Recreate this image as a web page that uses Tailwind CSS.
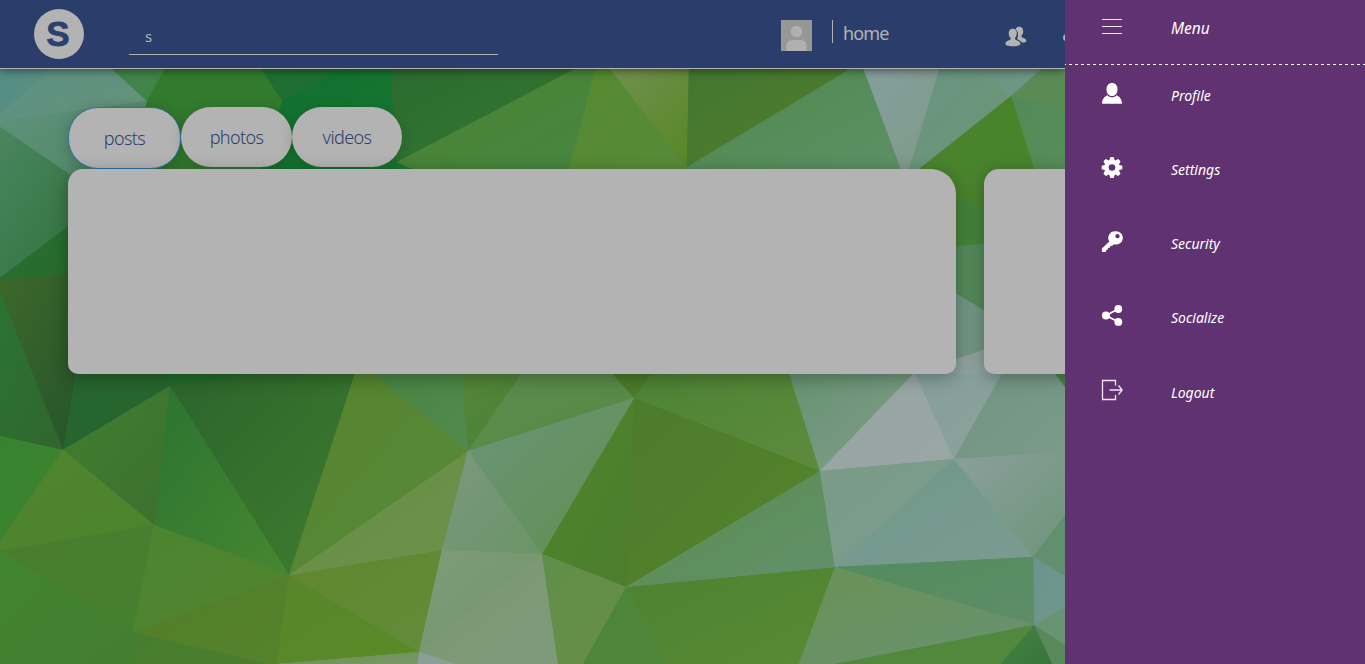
<!DOCTYPE html>
<html lang="en">
<head>
<meta charset="utf-8">
<title>Home</title>
<script src="https://cdn.jsdelivr.net/npm/@tailwindcss/browser@4"></script>
</head>
<body class="relative h-[664px] w-[1365px] overflow-hidden bg-[#1e7031] font-['Noto_Sans','Open_Sans',sans-serif]">
<svg id="backdrop" class="absolute inset-0 -z-10" width="1365" height="664" viewBox="0 0 1365 664"></svg>
<div class="flex h-full">
  <div class="h-full w-[1065px] shrink-0 overflow-hidden">
    <header class="flex h-[69px] items-start border-b border-[#b3b3b3] bg-[#2b3e6b] text-[#b3b3b3] shadow-[0_2px_8px_rgba(0,0,0,0.45)]">
      <div class="mt-[9px] ml-[34px] flex size-[50px] shrink-0 items-center justify-center rounded-full bg-[#b3b3b3]">
        <span class="mt-[-2px] ml-[-2px] font-['Liberation_Sans',sans-serif] text-[35px] leading-none font-bold text-[#2b4170] [-webkit-text-stroke:0.8px_#2b4170]">S</span>
      </div>
      <div class="ml-[45px] h-[55px] w-[369px] shrink-0 border-b border-[#b3b3b3] pt-[25px] pl-4 text-[15px] leading-[22px]">s</div>
      <svg class="mt-5 ml-[283px] shrink-0" width="31" height="31" viewBox="0 0 31 31"><rect width="31" height="31" fill="#979797"/><circle cx="15.500" cy="11.500" r="5.800" fill="#b0b0b0"/><path d="M5.300 31v-4.500q0-6.500 6.500-6.500h7.400q6.500 0 6.500 6.500V31z" fill="#b0b0b0"/></svg>
      <div class="mt-5 ml-5 h-[23px] shrink-0 border-l border-[#b3b3b3] pl-[10px] text-[18px] leading-[26px] tracking-[-0.9px]"><span class="inline-block w-[60px]">home</span></div>
      <svg class="mt-[26px] ml-[102px] shrink-0" width="22" height="21" viewBox="0 0 22 21" fill="#b3b3b3"><path d="M10.500 3.500C11.200 1.500 12.500.800 14.200.800c2.600 0 4 1.900 4 4.400 0 2-.7 3.500-1.700 4.400-.3 1 .1 1.600 1 2 2.300 1 3.900 1.600 3.900 3.600 0 .9-2.300 1.400-4.700 1.200-.8-1.600-2.400-2.300-4-3-.6-.3-.7-.8-.2-1.600C13.600 9.500 13.200 4.800 10.500 3.500z"/><path d="M7.700 2.700c2.600 0 4.100 2 4.100 4.600 0 2-.8 3.700-1.800 4.600-.3 1.100.1 1.700 1.100 2.100 2.500 1 4.300 1.700 4.300 3.900 0 1.500-3.400 2.300-7.500 2.300S.4 19.500.4 18c0-2.200 1.500-3.100 4.200-4 .9-.3 1.300-1 1-2.100-1.200-.9-1.900-2.600-1.900-4.600 0-2.700 1.400-4.600 4-4.600z"/></svg>
      <div class="mt-[34px] ml-[36px] size-[7px] shrink-0 rounded-full bg-[#b3b3b3]"></div>
    </header>
    <main class="pt-[38px] pl-[68px] text-[18px] font-light tracking-[-0.6px] text-[#2b3e6b]">
      <nav class="flex h-[62px] items-start">
        <div class="flex h-[62px] w-[113px] items-center justify-center rounded-[30px] border border-[#2f6fa8] bg-[#b3b3b3] shadow-[0_2px_14px_rgba(0,0,0,0.22)]">posts</div>
        <div class="flex h-[60px] w-[111px] items-center justify-center rounded-[30px] bg-[#b3b3b3] shadow-[0_2px_14px_rgba(0,0,0,0.16)]">photos</div>
        <div class="flex h-[60px] w-[110px] items-center justify-center rounded-[30px] bg-[#b3b3b3] shadow-[0_2px_14px_rgba(0,0,0,0.16)]">videos</div>
      </nav>
      <div class="flex gap-7">
        <section class="h-[205px] w-[888px] shrink-0 rounded-[15px_25px_10px_10px] bg-[#b3b3b3] shadow-[0_4px_18px_rgba(0,0,0,0.3)]"></section>
        <section class="h-[205px] w-[300px] shrink-0 rounded-[15px_25px_10px_10px] bg-[#b3b3b3] shadow-[0_4px_18px_rgba(0,0,0,0.3)]"></section>
      </div>
    </main>
  </div>
  <aside class="z-10 h-full w-[300px] shrink-0 bg-[#613272] text-[14px] text-white italic">
    <div class="flex h-16 items-start pl-[37px]">
      <svg class="mt-[17px]" width="21" height="20" viewBox="0 0 21 20" stroke="#f3eef5"><path d="M0 2.500h20M0 9.500h20M0 16.500h20"/></svg>
      <span class="mt-[18px] ml-[48px] text-[15.500px] leading-5">Menu</span>
    </div>
    <svg class="block" width="300" height="1" viewBox="0 0 300 1"><path d="M-2 .5H300" stroke="#fff" stroke-dasharray="3 3"/></svg>
    <div class="flex h-[74px] items-start pt-[18px] pl-[36px]">
      <svg width="22" height="22" viewBox="0 0 22 22" fill="#fff"><path d="M11 0c3.400 0 5.500 2.600 5.500 6.400S14.200 13 11 13 5.500 10.200 5.500 6.400 7.600 0 11 0z"/><path d="M6.300 12.200C9 15 13 15 15.700 12.200c2.600.9 5.300 4.700 5.300 7.700 0 .5-.3.900-.9.900H1.900c-.6 0-.9-.4-.9-.9 0-3 2.700-6.800 5.300-7.700z"/></svg>
      <span class="mt-[3px] ml-[48px] leading-5">Profile</span>
    </div>
    <div class="flex h-[74px] items-start pt-[18px] pl-[36px]">
      <svg width="22" height="22" viewBox="0 0 22 22"><g fill="#fff"><circle cx="11" cy="10.500" r="7.700"/><path id="tooth" d="M9.200.300q1.800-.5 3.600 0l1.200 4.200H8z"/><use href="#tooth" transform="rotate(45 11 10.500)"/><use href="#tooth" transform="rotate(90 11 10.500)"/><use href="#tooth" transform="rotate(135 11 10.500)"/><use href="#tooth" transform="rotate(180 11 10.500)"/><use href="#tooth" transform="rotate(225 11 10.500)"/><use href="#tooth" transform="rotate(270 11 10.500)"/><use href="#tooth" transform="rotate(315 11 10.500)"/></g><circle cx="11" cy="10.500" r="3.300" fill="#613272"/></svg>
      <span class="mt-[3px] ml-[48px] leading-5">Settings</span>
    </div>
    <div class="flex h-[74px] items-start pt-[18px] pl-[36px]">
      <svg width="22" height="22" viewBox="0 0 22 22"><path d="M14.600.200a6.700 6.700 0 1 1-1.700 13l-1.600 1.500-1.900.2-.4 1.700-1.900.3-.3 1.700-1.500.3-.4 1.800-1.500.4H.9v-3.500l7.400-7A6.800 6.800 0 0 1 14.600.200z" fill="#fff"/><circle cx="16.500" cy="5.200" r="2.100" fill="#613272"/></svg>
      <span class="mt-[3px] ml-[48px] leading-5">Security</span>
    </div>
    <div class="flex h-[74px] items-start pt-[18px] pl-[36px]">
      <svg width="22" height="22" viewBox="0 0 22 22" fill="#fff"><path d="M17 4 5 10.500l12 6.300" fill="none" stroke="#fff" stroke-width="1.700"/><circle cx="17.300" cy="4" r="3.900"/><circle cx="4.900" cy="10.500" r="4"/><circle cx="17.300" cy="16.900" r="3.900"/></svg>
      <span class="mt-[3px] ml-[48px] leading-5">Socialize</span>
    </div>
    <div class="flex h-[74px] items-start pt-[19px] pl-[36px]">
      <svg class="-mt-px" width="22" height="22" viewBox="0 0 22 22" fill="none" stroke="#efe8f1" stroke-width="1.300"><path d="M14.500 6.500V1.500h-13v19h13V16M8.500 11H21M17.500 6.500 21.200 11l-3.700 4.500"/></svg>
      <span class="mt-[3px] ml-[48px] leading-5">Logout</span>
    </div>
  </aside>
</div>
<script>
// Each facet: points, start colour, end colour (diagonal gradient across its box)
const facets = [
["0,60 60,60 0,115","#518c86","#60917f"],
["60,60 102,60 147,101 0,121 0,115","#5b9186","#669279"],
["0,121 147,101 130,195 100,195 0,127","#60927d","#4c8560"],
["0,127 100,195 100,202 0,278","#4a855f","#2f7038"],
["0,278 100,202 100,272 0,280","#2a702d","#266a2d"],
["0,280 100,272 76,374 63,450 0,292","#3d682b","#235229"],
["0,292 63,450 0,436","#2b7433","#31652d"],
["76,374 165,374 170,386 63,450","#27652f","#27652f"],
["76,370 165,370 165,375 76,375","#27652f","#27652f"],
["162,370 290,370 170,386","#226b2b","#226b2b"],
["170,386 290,370 359,370 289,575","#2c642c","#3f7d2e"],
["63,450 170,386 154,525","#427e30","#3b702e"],
["170,386 289,575 154,525","#2b7332","#46872f"],
["0,436 63,450 0,542","#36832f","#3f832f"],
["63,450 154,525 0,551 0,542","#50852d","#4b832e"],
["0,551 154,525 133,632","#497c2e","#468130"],
["0,556 0,551 133,632 133,664 0,664","#41852f","#447e30"],
["154,525 289,575 133,632","#4c8431","#51852d"],
["133,632 289,575 277,664 265,664","#527e2b","#55822b"],
["133,632 265,664 133,664","#467d30","#4b7e2d"],
["289,575 419,652 277,664","#58862c","#598a27"],
["289,575 442,550 419,652","#5f872c","#648b3b"],
["289,575 468,451 442,550","#698d43","#6b914c"],
["356,370 369,370 468,451 289,575","#55842b","#588a3d"],
["369,370 461,370 468,451","#488442","#528a4e"],
["461,370 524,370 468,451","#548538","#4a8339"],
["524,370 609,370 634,398 468,451","#5d8c50","#558a42"],
["609,370 654,370 634,398","#4b7b2b","#4b7b2b"],
["654,370 788,370 820,471 634,398","#4d8334","#5d8b3d"],
["634,398 820,471 626,587","#4c7b2d","#56842b"],
["634,398 626,587 542,554","#4e852a","#4c7d2d"],
["468,451 634,398 542,554","#6a9578","#628e50"],
["468,451 542,554 442,550","#7c987e","#6b9468"],
["442,550 542,554 419,652","#7e9b78","#71956c"],
["542,554 419,652 455,664 558,664","#7a9871","#7f9a7a"],
["419,652 455,664 417,664","#8b9f98","#8b9f98"],
["277,664 419,652 417,664","#6d924f","#779767"],
["542,554 626,587 583,664 558,664","#5f8e49","#688f48"],
["626,587 583,664 668,664","#4c853c","#50863a"],
["626,587 835,567 799,664 668,664","#4d822f","#598a35"],
["626,587 820,471 835,567","#598c4a","#62916d"],
["788,370 917,370 820,471","#659170","#829f8c"],
["820,471 917,370 954,459","#96a5a4","#9aa6a4"],
["913,370 1004,370 954,459","#86a09c","#8ba09a"],
["1004,370 1065,370 1065,453 954,459","#709482","#7c9a8a"],
["1052,370 1065,370 1065,387","#4a8449","#4a8449"],
["820,471 954,459 835,567","#7b9b87","#7c9b91"],
["835,567 954,459 1033,557","#6e988b","#7c9b91"],
["954,459 1065,452 1065,515 1033,557","#8b9f9d","#6e9578"],
["1033,557 1065,515 1065,576","#62906e","#62906e"],
["1033,557 1065,576 1065,607 1034,625","#6c948d","#70978a"],
["1034,625 1065,607 1065,645","#6a9373","#6a9373"],
["1034,625 1065,645 1065,664 1052,664","#59895a","#59895a"],
["1034,625 1052,664 1000,664","#438343","#38743a"],
["835,567 1033,557 1034,625","#528c5d","#5e8d66"],
["835,567 1034,625 835,664 799,664","#6b9155","#669272"],
["1034,625 1000,664 835,664","#52873a","#51893f"],
["102,60 170,60 147,101","#40844a","#40844a"],
["170,60 256,60 282,101 283,175 135,175 147,101","#327a2e","#327a2e"],
["256,60 358,60 282,101","#217031","#1d6c32"],
["282,101 358,60 390,60 397,162 415,172 260,172","#116f30","#197830"],
["390,60 592,60 397,162","#2b6a2f","#347a31"],
["397,162 592,60 598,60 569,172 422,172","#4b8334","#47853f"],
["598,60 603,60 687,167 690,172 568,172","#568930","#588b38"],
["603,60 689,60 687,167","#729253","#588626"],
["689,60 865,60 687,167","#417630","#557e2d"],
["687,167 865,60 860,60 905,175 690,175","#4c8848","#5e9068"],
["860,60 942,60 910,172 902,172","#859f9f","#7f9a87"],
["942,60 966,60 1011,96 916,172 908,172","#689481","#6d9677"],
["966,60 1052,60 1011,96","#6c947f","#6f9688"],
["1052,60 1065,60 1065,107 1011,96","#5b8b55","#5b8b55"],
["1011,96 1065,107 1065,175 1036,175","#528a57","#588d58"],
["1011,96 1036,175 1000,215 950,197 905,180","#49842d","#49842d"],
["950,197 990,209 990,243 950,247","#438339","#438339"],
["950,247 990,243 990,314 950,290","#53895a","#53895a"],
["950,290 990,314 990,348 950,361","#729583","#729583"],
["950,361 990,348 990,374 950,374","#8fa19e","#8fa19e"]
];
const shapes = facets.map(([p, a, b], i) =>
  `<linearGradient id="f${i}" x1="0" y1="0" x2="1" y2="1"><stop offset="0" stop-color="${a}"/><stop offset="1" stop-color="${b}"/></linearGradient><polygon points="${p}" fill="url(#f${i})"/>`
).join("");
const underlay = facets.map(([p], i) =>
  `<polygon points="${p}" fill="none" stroke="url(#f${i})" stroke-width="1.5" stroke-linejoin="round"/>`
).join("");
document.getElementById("backdrop").innerHTML = underlay + shapes;
</script>
</body>
</html>
